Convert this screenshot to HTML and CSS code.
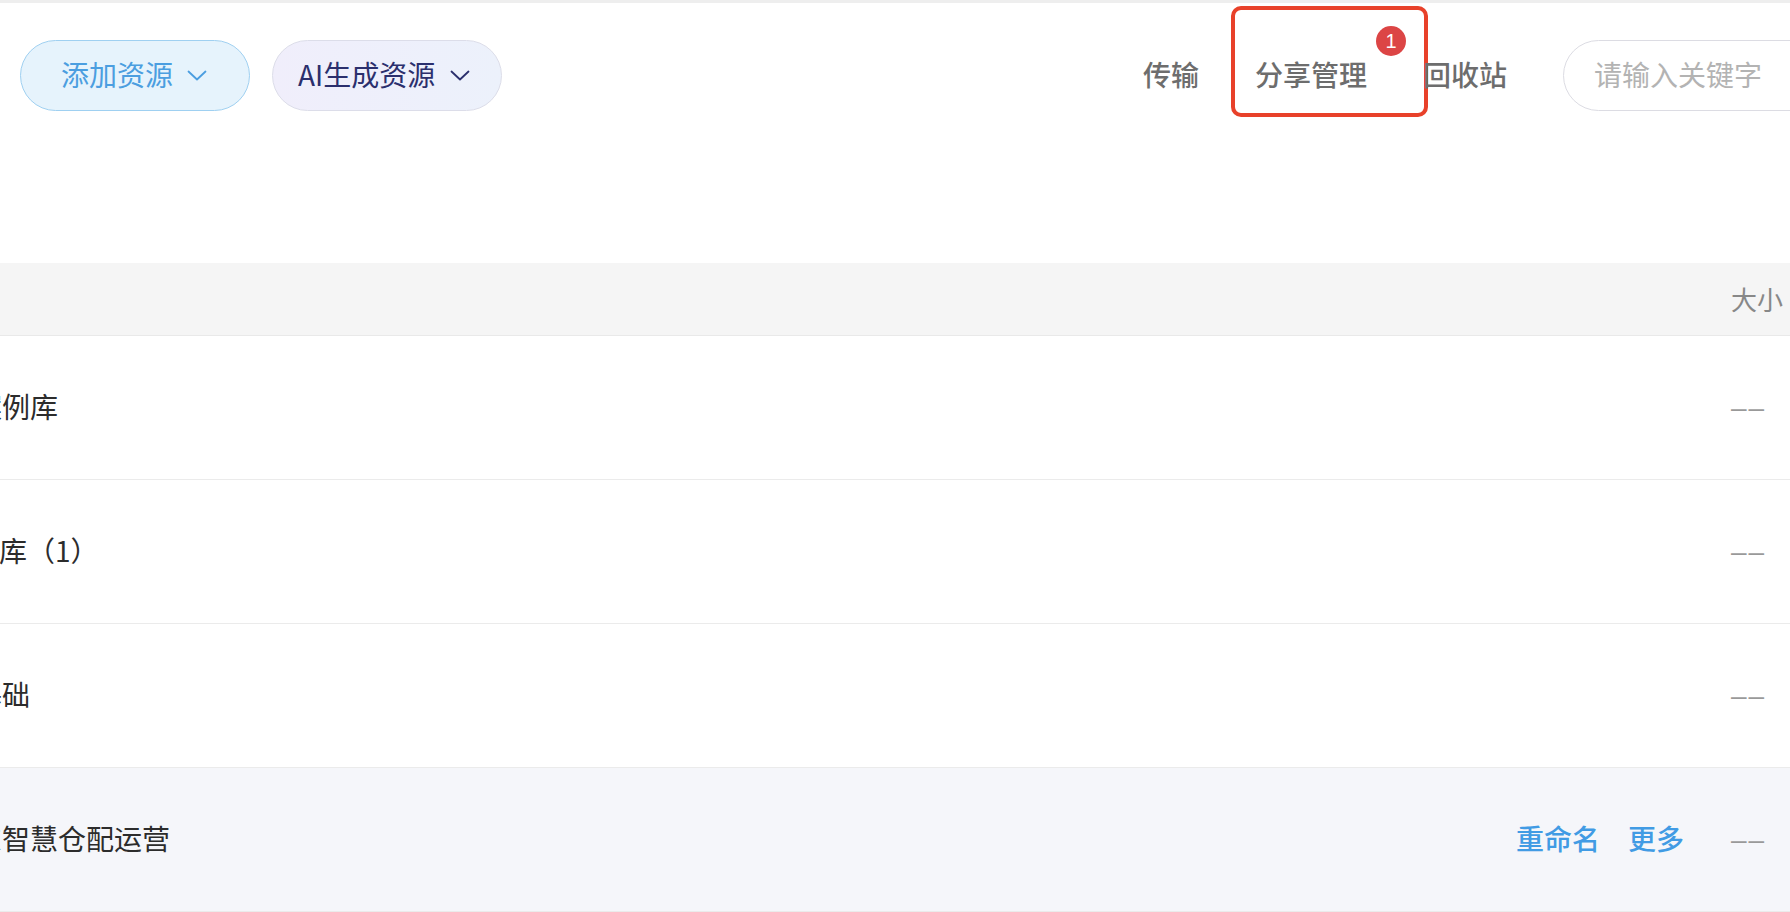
FILE: index.html
```html
<!DOCTYPE html>
<html lang="zh-CN">
<head>
<meta charset="utf-8">
<title>资源管理</title>
<link rel="stylesheet" href="styles.css">
</head>
<body>
<div class="topline"></div>
<div class="toolbar">
  <div class="actions-left">
    <button class="btn btn-add"><span class="btn-text">添加资源</span>
      <svg class="chev" width="20" height="11" viewBox="0 0 20 11"><polyline points="1.5,1.5 10,9.5 18.5,1.5" fill="none" stroke="currentColor" stroke-width="1.8" stroke-linecap="round" stroke-linejoin="round"/></svg>
    </button>
    <button class="btn btn-ai"><span class="btn-text">AI生成资源</span>
      <svg class="chev" width="20" height="11" viewBox="0 0 20 11"><polyline points="1.5,1.5 10,9.5 18.5,1.5" fill="none" stroke="currentColor" stroke-width="1.8" stroke-linecap="round" stroke-linejoin="round"/></svg>
    </button>
  </div>
  <nav class="nav">
    <span class="nav-item">传输</span>
    <span class="nav-item nav-share">分享管理<span class="badge">1</span><span class="mark"></span></span>
    <span class="nav-item">回收站</span>
    <div class="search"><span class="placeholder">请输入关键字</span></div>
  </nav>
</div>

<div class="table">
  <div class="thead">
    <div class="cell-name"></div>
    <div class="cell-size">大小</div>
  </div>
  <div class="row">
    <div class="cell-name"><span class="name n1">案例库</span></div>
    <div class="cell-size dash">––</div>
  </div>
  <div class="row">
    <div class="cell-name"><span class="name n2">题库（1）</span></div>
    <div class="cell-size dash">––</div>
  </div>
  <div class="row">
    <div class="cell-name"><span class="name n1">基础</span></div>
    <div class="cell-size dash">––</div>
  </div>
  <div class="row row-hover">
    <div class="cell-name"><span class="name n1">东智慧仓配运营</span></div>
    <div class="row-ops"><span class="op">重命名</span><span class="op">更多</span></div>
    <div class="cell-size dash">––</div>
  </div>
</div>
</body>
</html>
```
FILE: styles.css
```css
html, body {
  margin: 0;
  padding: 0;
  background: #ffffff;
  overflow: hidden;
  width: 1790px;
  height: 912px;
  font-family: "Noto Sans CJK SC", "Noto Sans", sans-serif;
}

.topline {
  height: 3px;
  background: #eeeeee;
}

.toolbar {
  display: flex;
  align-items: center;
  justify-content: space-between;
  padding: 37px 0 0 20px;
  margin-right: -73px;
  height: 71px;
}

.actions-left {
  display: flex;
  align-items: center;
  gap: 22px;
}

.btn {
  display: flex;
  align-items: center;
  box-sizing: border-box;
  height: 71px;
  border-radius: 36px;
  font-family: inherit;
  font-size: 28px;
  line-height: 1;
  cursor: pointer;
}

.btn-text {
  display: block;
  margin-bottom: 4px;
}

.btn-add {
  width: 230px;
  padding: 0 0 0 40px;
  gap: 14px;
  color: #4b9ee0;
  background: #e6f3fc;
  border: 1px solid #9fd0f1;
}

.btn-ai {
  width: 230px;
  padding: 0 0 0 25px;
  gap: 15px;
  color: #2b2f6d;
  background: linear-gradient(90deg, #f0eefb 0%, #ecf1fb 100%);
  border: 1px solid #dcdde9;
}

.chev {
  display: block;
  margin-top: 0;
}

.nav {
  display: flex;
  align-items: center;
  gap: 56px;
}

.nav-item {
  position: relative;
  font-size: 28px;
  line-height: 40px;
  font-weight: 500;
  color: #6d6d6d;
  margin-bottom: 4px;
}

.badge {
  position: absolute;
  left: calc(100% + 9px);
  top: -28px;
  width: 30px;
  height: 30px;
  border-radius: 50%;
  background: #dc4545;
  color: #ffffff;
  font-family: "Liberation Sans", sans-serif;
  font-size: 20px;
  font-weight: 400;
  line-height: 30px;
  text-align: center;
}

.mark {
  position: absolute;
  left: -24px;
  right: -61px;
  top: -48px;
  height: 111px;
  box-sizing: border-box;
  border: 4px solid #e8412a;
  border-radius: 10px;
  pointer-events: none;
}

.search {
  display: flex;
  align-items: center;
  box-sizing: border-box;
  width: 300px;
  height: 71px;
  padding: 0 0 4px 30px;
  border: 1px solid #dcdce3;
  border-radius: 36px;
}

.placeholder {
  font-size: 28px;
  color: #b3b3b3;
}

.table {
  margin-top: 152px;
}

.thead {
  display: flex;
  align-items: center;
  height: 72px;
  background: #f5f5f5;
  border-bottom: 1px solid #e9e9e9;
}

.thead .cell-size {
  font-size: 26px;
  color: #888888;
  padding-bottom: 2px;
}

.row {
  display: flex;
  align-items: center;
  height: 143px;
  border-bottom: 1px solid #ebebeb;
}

.row-hover {
  background: #f5f6fa;
}

.cell-name {
  flex: 1;
  min-width: 0;
  white-space: nowrap;
}

.name {
  display: inline-block;
  font-size: 28px;
  color: #2c2c2c;
  margin-bottom: 4px;
}

.n1 { margin-left: -26px; }
.n2 { margin-left: -29px; }

.row-ops {
  display: flex;
  gap: 28px;
  margin-right: 47px;
  margin-bottom: 4px;
}

.op {
  font-size: 28px;
  font-weight: 500;
  color: #419be4;
}

.cell-size {
  width: 59px;
  flex: none;
  white-space: nowrap;
}

.dash {
  font-family: "Liberation Sans", sans-serif;
  font-size: 28px;
  letter-spacing: 2px;
  color: #999999;
}
```
